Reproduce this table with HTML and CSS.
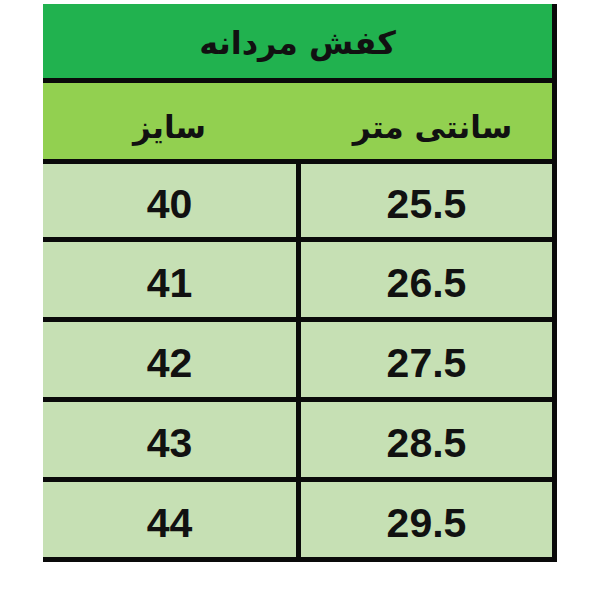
FILE: index.html
```html
<!DOCTYPE html>
<html lang="fa">
<head>
<meta charset="utf-8">
<title>کفش مردانه</title>
<link rel="stylesheet" href="styles.css">
</head>
<body>
<div class="sheet" dir="rtl">
  <div class="title">کفش مردانه</div>
  <div class="row head">
    <div class="cell">سانتی متر</div>
    <div class="cell">سایز</div>
  </div>
  <div class="row data first">
    <div class="cell">25.5</div>
    <div class="cell">40</div>
  </div>
  <div class="row data">
    <div class="cell">26.5</div>
    <div class="cell">41</div>
  </div>
  <div class="row data">
    <div class="cell">27.5</div>
    <div class="cell">42</div>
  </div>
  <div class="row data">
    <div class="cell">28.5</div>
    <div class="cell">43</div>
  </div>
  <div class="row data">
    <div class="cell">29.5</div>
    <div class="cell">44</div>
  </div>
</div>
</body>
</html>
```
FILE: styles.css
```css
html, body {
  margin: 0;
  padding: 0;
  background: #ffffff;
}

.sheet {
  margin: 4px 0 0 43px;
  width: 509px;
  border-right: 5px solid #0a0a0a;
  color: #111;
}

.title {
  height: 79px;
  box-sizing: border-box;
  padding-top: 4px;
  border-bottom: 5px solid #0a0a0a;
  background: #21b24f;
  display: flex;
  align-items: center;
  justify-content: center;
  font-family: "DejaVu Sans", sans-serif;
  font-weight: bold;
  font-size: 32px;
}

.row {
  display: grid;
  grid-template-columns: 251px 253px;
  border-bottom: 5px solid #0a0a0a;
}

.head {
  height: 76px;
  background: #92d050;
  column-gap: 5px;
}

.head .cell {
  font-family: "DejaVu Sans", sans-serif;
  font-weight: bold;
  font-size: 31px;
  padding-top: 12px;
}

.head .cell:first-child {
  padding-left: 12px;
}

.data {
  height: 75px;
  background: #0a0a0a;
  column-gap: 5px;
}

.data.first {
  height: 73px;
}

.cell {
  display: flex;
  align-items: center;
  justify-content: center;
}

.data .cell {
  background: #c6e0b4;
  font-family: "Liberation Sans", Arial, sans-serif;
  font-weight: bold;
  font-size: 41px;
  padding-top: 7px;
}
```
